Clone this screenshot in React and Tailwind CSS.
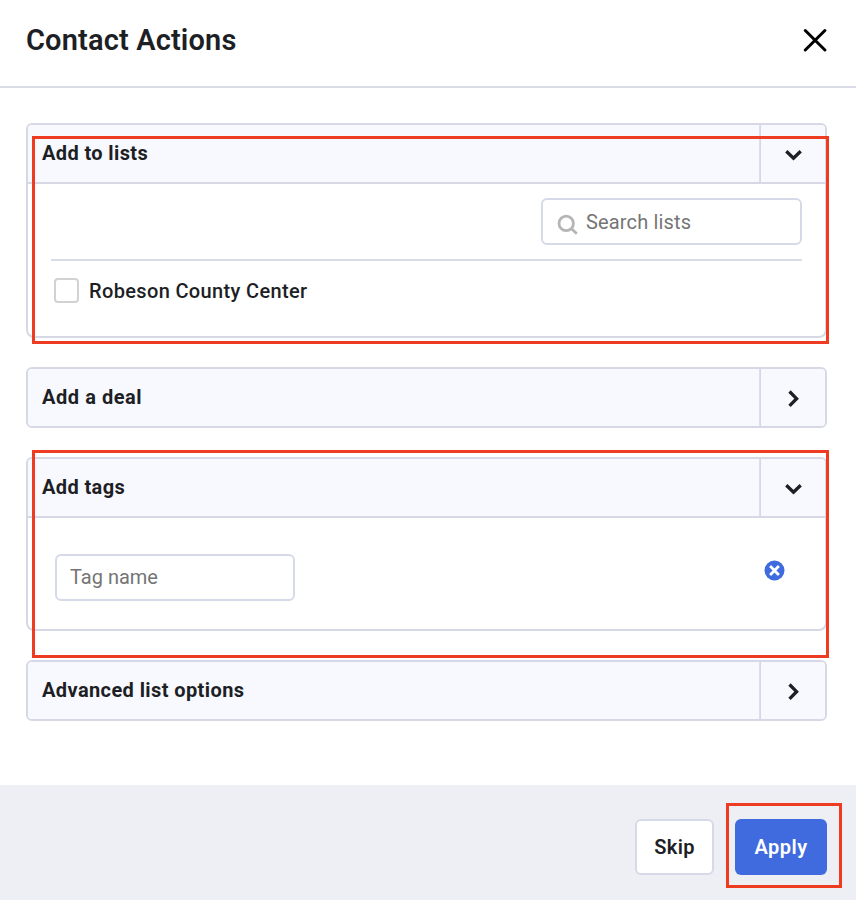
import { useState } from 'react'

function Chevron({ open }) {
  return (
    <svg
      className="w-6 h-6"
      viewBox="0 0 24 24"
      fill="none"
      stroke="#1d1f25"
      strokeWidth="3.3"
    >
      {open ? <path d="M5.3 8.2 12.5 15.2 19.7 8.2" /> : <path d="M8.5 4.5 15.6 11.7 8.5 18.9" />}
    </svg>
  )
}

function Panel({ title, titleClass, open, onToggle, className, children }) {
  return (
    <section className={`border-2 border-[#d6d9e5] overflow-hidden ${open ? 'rounded-t-md rounded-b-lg' : 'rounded-md'} ${className}`}>
      <div className={`flex h-[57px] bg-[#f8f9ff] ${open ? 'box-content border-b-2 border-[#d6d9e5]' : ''}`}>
        <h2 className={`flex-1 pl-[14px] pt-[13px] text-[20px] leading-[31px] font-bold whitespace-nowrap ${titleClass}`}>
          {title}
        </h2>
        <button
          className="w-[65px] flex items-center justify-center pt-[2px] shadow-[-1px_0_0_#dcdfea] border-l border-[#d6d9e5]"
          aria-label={title}
          onClick={onToggle}
        >
          <Chevron open={open} />
        </button>
      </div>
      {open && children}
    </section>
  )
}

export default function App() {
  const [open, setOpen] = useState({ lists: true, deal: false, tags: true, advanced: false })

  const toggle = key => setOpen(o => ({ ...o, [key]: !o[key] }))

  return (
    <div className="relative w-[856px] h-[900px] flex flex-col bg-white text-[#1d1f25] font-['Roboto','Noto_Sans',sans-serif] overflow-hidden">
      <header className="h-[88px] shrink-0 flex items-start justify-between pl-[26px] pr-[28px] border-b-2 border-[#d9dbe6]">
        <h1 className="pt-[22px] text-[29px] leading-[37px] font-semibold tracking-[0.15px] whitespace-nowrap">Contact Actions</h1>
        <button className="mt-[28px]" aria-label="Close">
          <svg className="w-7 h-6" viewBox="0 0 28 24" fill="none" stroke="#000" strokeWidth="3" strokeLinecap="round">
            <path d="M5.3 2.5 24.9 22M24.9 2.5 5.3 22" />
          </svg>
        </button>
      </header>

      <main className="flex-1 pl-[26px] pr-[29px] pt-[35px]">
        <Panel title="Add to lists" titleClass="tracking-[0.38px]" open={open.lists} onToggle={() => toggle('lists')} className="h-[215px]">
          <div className="pl-[23px] pr-[23px] pt-[14px]">
            <div className="flex justify-end pb-[14px] border-b-2 border-[#d9dce9]">
              <label className="w-[261px] h-[47px] flex items-center pl-[14px] rounded-md border-2 border-[#d6d9e7]">
                <svg className="w-6 h-6 mt-[6px] shrink-0" viewBox="0 0 24 24" fill="none" stroke="#b5b5b5" strokeWidth="2.8">
                  <circle cx="9.2" cy="10.4" r="7.2" />
                  <path d="m14.3 15.5 5.5 5.3" />
                </svg>
                <input className="w-[190px] pl-[5px] text-[20px] tracking-[0.15px] outline-none placeholder:text-[#757575]" placeholder="Search lists" />
              </label>
            </div>
            <label className="flex items-center gap-[10px] pl-[3px] pt-[14px]">
              <input type="checkbox" className="appearance-none w-[25px] h-[25px] mb-px rounded-[4px] border-2 border-[#d2d2d2]" />
              <span className="pt-px text-[20px] leading-[30px] font-medium tracking-[0.35px] whitespace-nowrap">Robeson County Center</span>
            </label>
          </div>
        </Panel>

        <Panel title="Add a deal" titleClass="tracking-[0.55px]" open={open.deal} onToggle={() => toggle('deal')} className="mt-[29px] h-[61px]" />

        <Panel title="Add tags" titleClass="tracking-[0.38px]" open={open.tags} onToggle={() => toggle('tags')} className="mt-[29px] h-[174px]">
          <div className="flex items-start justify-between pl-[27px] pr-[40px] pt-[36px]">
            <input
              className="w-[240px] h-[47px] px-[13px] pb-px rounded-md border-2 border-[#d6d9e7] text-[20px] outline-none placeholder:text-[#757575]"
              placeholder="Tag name"
            />
            <button className="mt-[6px]" aria-label="Remove tag">
              <svg className="w-[21px] h-[21px]" viewBox="0 0 21 21">
                <circle cx="10.5" cy="10.5" r="10" fill="#3f6bdf" />
                <path d="m6.1 6.1 8.8 8.8M14.9 6.1l-8.8 8.8" stroke="#fff" strokeWidth="2.8" />
              </svg>
            </button>
          </div>
        </Panel>

        <Panel title="Advanced list options" titleClass="tracking-[0.4px]" open={open.advanced} onToggle={() => toggle('advanced')} className="mt-[29px] h-[61px]" />
      </main>

      <footer className="h-[115px] shrink-0 flex items-start justify-end gap-[21px] pr-[29px] pt-[34px] bg-[#eeeff5] text-[20px] font-semibold">
        <button className="w-[79px] h-[56px] rounded-md border-2 border-[#d6d9e7] bg-white tracking-[0.3px]">Skip</button>
        <button className="w-[92px] h-[56px] rounded-md bg-[#3f6bdf] text-white tracking-[0.5px]">Apply</button>
      </footer>

      {/* Highlight frames */}
      <div className="absolute left-[32px] top-[136px] w-[797px] h-[208px] border-3 border-[#ee3c23] pointer-events-none" />
      <div className="absolute left-[32px] top-[450px] w-[797px] h-[208px] border-3 border-[#ee3c23] pointer-events-none" />
      <div className="absolute left-[726px] top-[803px] w-[116px] h-[85px] border-3 border-[#ee3c23] pointer-events-none" />
    </div>
  )
}
